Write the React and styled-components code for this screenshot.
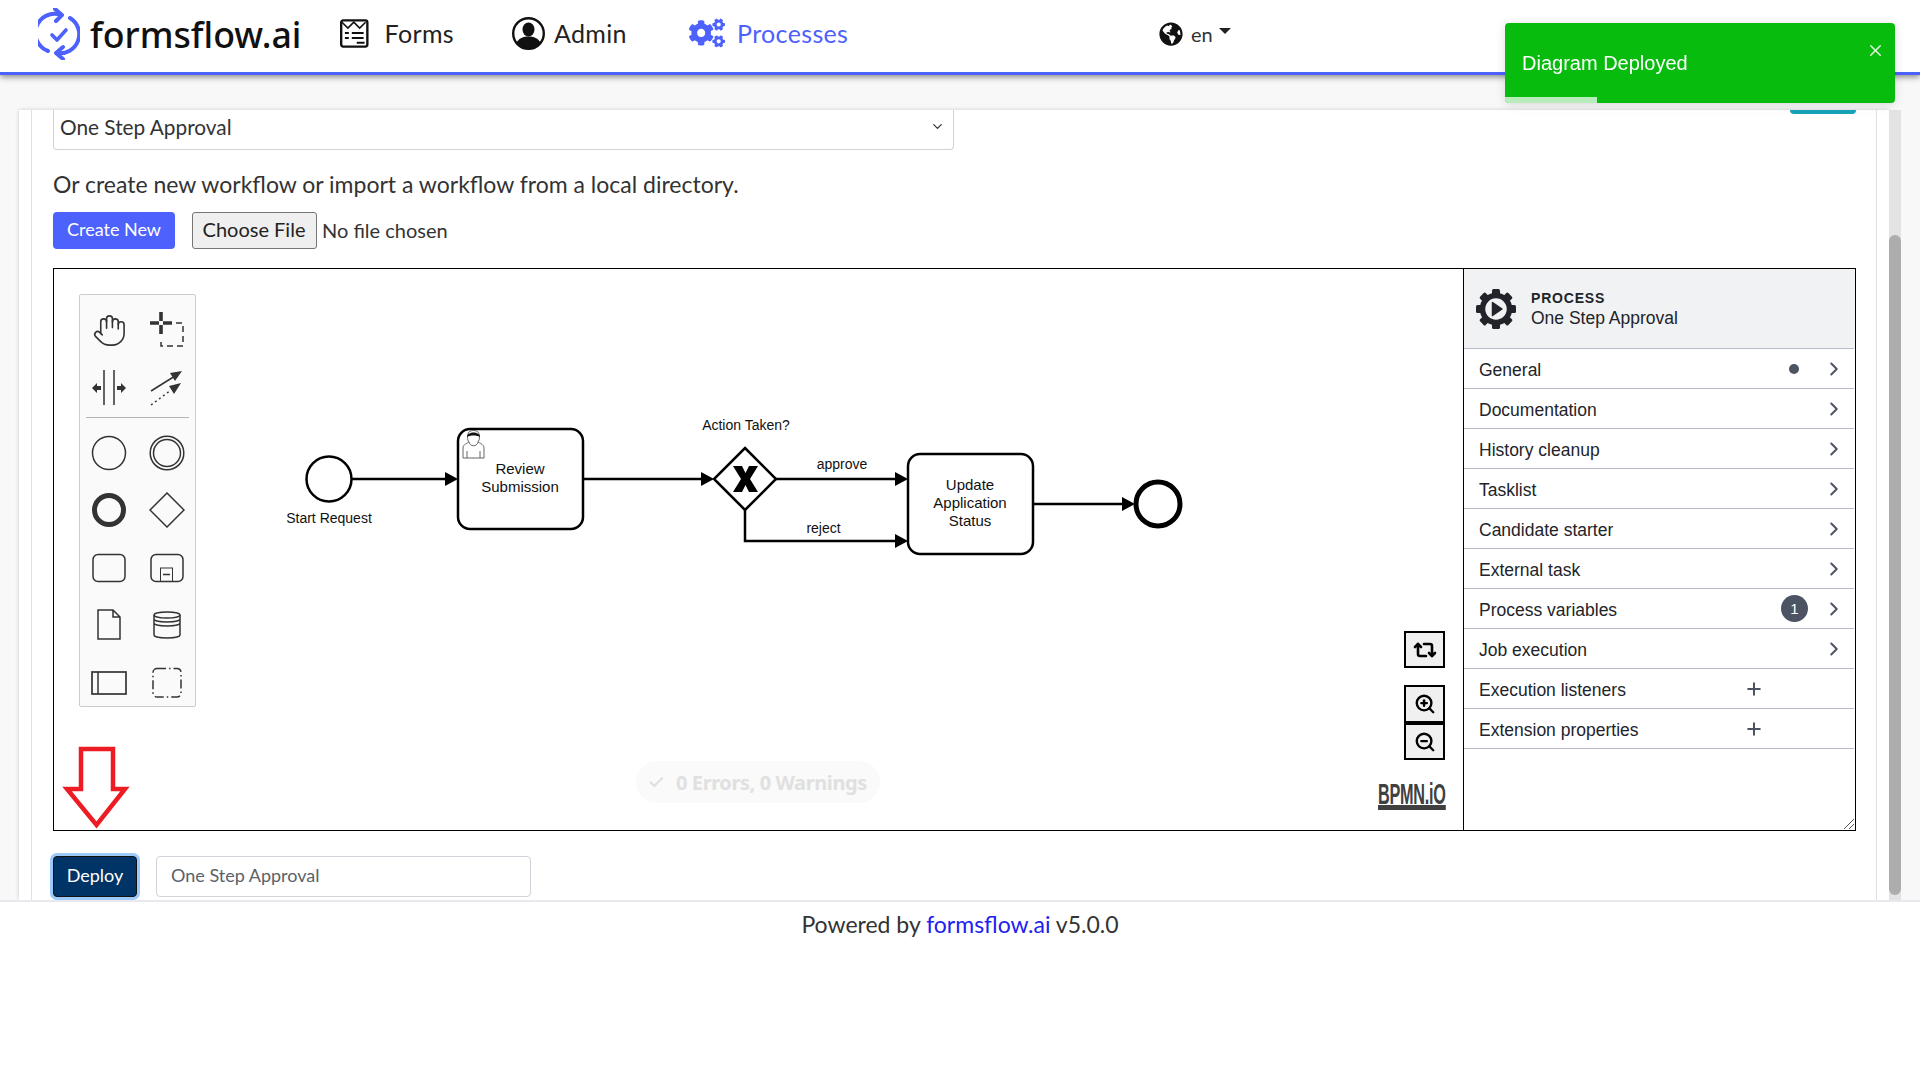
import React from "react";
import styled, { createGlobalStyle } from "styled-components";
import { Hand, ChevronRight, Plus, ZoomIn, ZoomOut, Repeat2, ChevronDown, X, Check } from "lucide-react";
import { FaCogs, FaGlobeAmericas } from "react-icons/fa";

const Global = createGlobalStyle`
  html, body { margin: 0; padding: 0; background: #fff; }
  body { font-family: Lato, "Noto Sans", sans-serif; color: #212529; overflow: hidden; }
  * { box-sizing: border-box; }
`;

const Page = styled.div`
  width: 1920px; height: 1080px; display: flex; flex-direction: column; background: #fff;
`;
const Header = styled.header`
  position: relative; z-index: 2; height: 75px; flex: none; display: flex; align-items: center;
  padding-left: 38px; background: #fff; border-bottom: 3px solid #4d61fc;
  box-shadow: 0 2px 6px rgba(0,0,0,.45);
`;
const Brand = styled.div`
  display: flex; align-items: center; gap: 10px; font: 500 35.7px "Noto Sans", sans-serif; color: #111;
  width: 262px; flex: none; margin-top: -5px;
  svg { flex: none; }
`;
const Nav = styled.nav`
  display: flex; align-items: center; gap: 58px; margin-left: 40px; height: 100%;
`;
const NavItem = styled.a`
  display: flex; align-items: center; gap: ${p => p.$gap}px; font-size: 25px; color: ${p => p.$active ? "#4d61fc" : "#222"};
  margin-top: -6px; width: ${p => p.$w}px; flex: none; letter-spacing: .35px;
`;
const Lang = styled.div`
  display: flex; align-items: center; gap: 8px; font-size: 20px; color: #333; margin-left: 310px; margin-top: -5px;
`;
const Caret = styled.span`
  display: block; width: 0; height: 0; border-left: 6px solid transparent; border-right: 6px solid transparent;
  border-top: 6px solid #222; margin: -6px 0 0 -2px;
`;
const Main = styled.main`
  height: 825px; flex: none; background: #f8f8f8; padding: 35px 19px 0; display: flex;
`;
const Card = styled.div`
  width: 1870px; background: #fff; padding: 0 12px; box-shadow: 0 0 4px rgba(0,0,0,.18); overflow: hidden;
`;
const Inner = styled.div`
  height: 100%; border-left: 1px solid #dee2e6; border-right: 1px solid #dee2e6; padding: 0 20px 0 21px;
`;
const TopRow = styled.div`
  display: flex; justify-content: space-between; height: 40px;
`;
const Select = styled.div`
  width: 901px; display: flex; align-items: center; justify-content: space-between; padding: 0 8px 7px 6px;
  border: 1px solid #ced4da; border-top: none; border-radius: 0 0 4px 4px; font-size: 20.8px; color: #333;
`;
const TealEdge = styled.div`
  width: 66px; height: 4px; background: #17a2b8; border-radius: 0 0 5px 5px;
`;
const Lead = styled.p`
  margin: 20px 0 0; height: 30px; line-height: 29px; font-size: 23px; color: #333;
`;
const FileRow = styled.div`
  display: flex; align-items: center; margin-top: 12px; height: 37px;
`;
const PrimaryButton = styled.button`
  width: 122px; height: 37px; padding: 0 0 3px; border: none; border-radius: 4px; background: #4d61fc; color: #fff;
  font: 18px Lato, sans-serif; margin-right: 17px;
`;
const FileButton = styled.button`
  width: 125px; height: 37px; padding: 0 1px 3px 0; border: 1px solid #767676; border-radius: 3px; background: #efefef; color: #222;
  font: 20px Lato, sans-serif; margin-right: 5px;
`;
const NoFile = styled.span`
  font-size: 20px; color: #333; margin-top: -2px;
`;
const Diagram = styled.section`
  display: flex; height: 563px; margin-top: 19px; width: 1803px; border: 1px solid #000;
`;
const Canvas = styled.div`
  position: relative; flex: 1; background: #fff;
`;
const DiagramSvg = styled.svg`
  position: absolute; left: 0; top: 0;
`;
const Palette = styled.div`
  position: absolute; left: 25px; top: 25px; width: 117px; height: 413px; background: #fafafa;
  border: 1px solid #ccc; border-radius: 2px; padding-top: 6px;
`;
const ToolGrid = styled.div`
  display: grid; grid-template-columns: 58px 58px; grid-auto-rows: ${p => p.$row}px;
  justify-items: center; align-items: center; margin-top: ${p => p.$top}px;
`;
const PaletteRule = styled.hr`
  margin: 0 6px; border: none; border-top: 1px solid #b5b5b5;
`;
const ZoomStack = styled.div`
  position: absolute; right: 18px; top: 362px; display: flex; flex-direction: column;
`;
const ZoomBtn = styled.div`
  width: 41px; height: ${p => p.$h}px; margin-bottom: ${p => p.$mb}px; background: #f0f0f0; border: 2.5px solid #000;
  display: flex; align-items: center; justify-content: center; color: #000;
`;
const Pill = styled.div`
  position: absolute; left: 582px; top: 492px; width: 244px; height: 42px; border-radius: 21px; background: #fafafa;
  display: flex; align-items: center; gap: 11px; padding-left: 12px; color: #e0e0e0; font: 700 20px "Noto Sans", sans-serif; letter-spacing: -.4px;
`;
const Powered = styled.div`
  position: absolute; right: 17px; bottom: 20px; font: 700 29px/1 "Liberation Sans", sans-serif;
  color: #404040; border-bottom: 5px solid #404040; letter-spacing: -.5px; height: 31px; padding-top: 1px;
  transform: scaleX(.56); transform-origin: right center;
`;
const Panel = styled.aside`
  position: relative; width: 392px; flex: none; border-left: 1px solid #000; font-family: "Liberation Sans", Arial, sans-serif;
`;
const PanelHead = styled.div`
  height: 79px; background: #f1f2f3; display: flex; align-items: center; gap: 15px; padding-left: 12px;
`;
const PanelText = styled.div`
  padding-top: 2px;
`;
const PanelType = styled.div`
  font-weight: 700; font-size: 14px; letter-spacing: .8px; color: #22242a; line-height: 16px;
`;
const PanelName = styled.div`
  font-size: 17.5px; color: #22242a; line-height: 21px; margin-top: 2px;
`;
const Row = styled.div`
  height: 40px; display: flex; align-items: center; margin-right: 1px; border-top: 1px solid #b9bcc6; padding-left: 15px;
  font-size: 17.5px; color: #22242a;
  &:last-of-type { border-bottom: 1px solid #b9bcc6; height: 41px; }
`;
const RowLabel = styled.span`
  flex: 1; padding-top: 3px;
`;
const RowDot = styled.span`
  width: 10px; height: 10px; border-radius: 50%; background: #4c5363; margin-right: 24px;
`;
const RowBadge = styled.span`
  width: 27px; height: 27px; border-radius: 50%; background: #4c5363; color: #fff; font-size: 15px;
  display: flex; align-items: center; justify-content: center; margin-right: 15px;
`;
const RowChevron = styled.span`
  width: 22px; margin-right: 9px; display: flex; justify-content: center; color: #4c5363;
`;
const RowPlus = styled.span`
  display: flex; margin-right: 90px; color: #4c5363;
`;
const Resize = styled.svg`
  position: absolute; right: 0; bottom: 0;
`;
const DeployRow = styled.div`
  display: flex; margin-top: 25px; height: 41px; gap: 19px;
`;
const DeployButton = styled.button`
  width: 84px; height: 41px; padding: 0 0 4px; border: 1px solid #111; border-radius: 4px; background: #003366; color: #fff;
  font: 18px Lato, sans-serif; box-shadow: 0 0 0 3px #9ccbfb;
`;
const NameInput = styled.div`
  width: 375px; height: 41px; border: 1px solid #ced4da; border-radius: 4px; padding: 0 14px 3px; display: flex; align-items: center;
  font-size: 18px; color: #5a6268;
`;
const ScrollTrack = styled.div`
  width: 12px; flex: none; background: #e3e3e3; display: flex; flex-direction: column; justify-content: flex-end; padding-bottom: 5px;
`;
const ScrollThumb = styled.div`
  height: 660px; background: #adadad; border-radius: 6px;
`;
const Footer = styled.footer`
  flex: 1; border-top: 2px solid #e8e8ee; background: #fff; text-align: center; padding-top: 8px; font-size: 23px; color: #333;
`;
const FooterLink = styled.a`
  color: #2020f0;
`;
const Toast = styled.div`
  position: fixed; right: 25px; top: 23px; width: 390px; height: 80px; z-index: 5; background: #07bc0c; color: #fff; border-radius: 4px;
  display: flex; align-items: center; padding-left: 17px; font: 20px "Liberation Sans", Arial, sans-serif; overflow: hidden;
  box-shadow: 0 1px 10px rgba(0,0,0,.1), 0 2px 15px rgba(0,0,0,.05);
`;
const ToastClose = styled.span`
  position: absolute; right: 10px; top: 18px; display: flex; color: rgba(255,255,255,.85);
`;
const ToastBar = styled.span`
  position: absolute; left: 0; bottom: 0; height: 6px; width: 92px; background: rgba(255,255,255,.72);
`;

const LogoIcon = () => (
  <svg width="42" height="52" viewBox="0 0 42 52" fill="none" stroke="#4d61fc" strokeWidth="4" strokeLinecap="round" strokeLinejoin="round">
    <path d="M10 43A19 19 0 0 1 23 7" />
    <path d="M17 1l7 6-6 6" />
    <path d="M32 10A19 19 0 0 1 19 45" />
    <path d="M25 39l-7 6 7 6" />
    <path d="M14 27l5 5 9-10" strokeWidth="3.6" />
  </svg>
);
const FormsIcon = () => (
  <svg width="29" height="29" viewBox="0 0 29 29" fill="none" stroke="#111" strokeWidth="2.4">
    <rect x="1.2" y="1.2" width="26.6" height="26.6" rx="2" />
    <path d="M2 3l6 6 6-6 6 6 6-6" strokeWidth="1.6" />
    <path d="M5 14h4M12 14h12M5 19h4M12 19h12M17 24h8" strokeWidth="2" />
  </svg>
);
const AdminIcon = () => (
  <svg width="33" height="33" viewBox="0 0 33 33">
    <circle cx="16.5" cy="16.5" r="15.3" fill="#fff" stroke="#111" strokeWidth="2.4" />
    <ellipse cx="16.5" cy="12.5" rx="6" ry="7" fill="#111" />
    <path d="M4.5 26c2-5 7-6.500 12-6.500S26.500 21 28.500 26a15 15 0 0 1-24 0z" fill="#111" />
  </svg>
);
const GearIcon = () => (
  <svg width="40" height="40" viewBox="0 0 40 40">
    {[0, 45, 90, 135, 180, 225, 270, 315].map(a => (
      <rect key={a} x="16" y="0" width="8" height="8" rx="1.500" fill="#22242a" transform={`rotate(${a} 20 20)`} />
    ))}
    <circle cx="20" cy="20" r="13.500" fill="none" stroke="#22242a" strokeWidth="5.500" />
    <path d="M16.500 13.500L26 20l-9.500 6.500z" fill="#22242a" stroke="#22242a" strokeWidth="1.500" strokeLinejoin="round" />
  </svg>
);

const ic = { width: 36, height: 36, viewBox: "0 0 36 36", fill: "none", stroke: "#333", strokeWidth: 1.5 };
const tools = [
  <Hand key="h" size={35} strokeWidth={1.1} color="#333" />,
  <svg key="l" {...ic}>
    <path d="M12 0v9M12 13v9M1 11h9M14 11h9" strokeWidth="3.600" />
    <path d="M27 11h7v23H12v-7" strokeDasharray="6 4" />
  </svg>,
  <svg key="s" {...ic}>
    <path d="M13 0v35M23 0v35" />
    <path d="M1 18l5-5v3h4v4H6v3zM35 18l-5-5v3h-4v4h4v3z" fill="#333" stroke="none" />
  </svg>,
  <svg key="c" {...ic}>
    <path d="M2 21L26 6" />
    <path d="M33 1L21 3l5 8z" fill="#333" stroke="none" />
    <path d="M2 35l20-15" strokeDasharray="2 3" />
    <path d="M32 13l-12 3 5 8z" fill="#333" stroke="none" />
  </svg>,
];
const shapes = [
  <svg key="1" {...ic}><circle cx="18" cy="18" r="16.500" /></svg>,
  <svg key="2" {...ic}><circle cx="18" cy="18" r="16.800" /><circle cx="18" cy="18" r="13.500" /></svg>,
  <svg key="3" {...ic}><circle cx="18" cy="18" r="14.500" strokeWidth="5" /></svg>,
  <svg key="4" {...ic}><path d="M18 1l17 17-17 17L1 18z" /></svg>,
  <svg key="5" {...ic}><rect x="2" y="4.500" width="32" height="27" rx="5" /></svg>,
  <svg key="6" {...ic}><rect x="2" y="4.500" width="32" height="27" rx="5" /><rect x="11.500" y="18" width="12" height="13.500" strokeWidth="1" /><path d="M14 24.500h7" /></svg>,
  <svg key="7" {...ic}><path d="M7 3h15l7 7v22H7zM22 3v7h7" /></svg>,
  <svg key="8" {...ic}><ellipse cx="18" cy="8" rx="13" ry="3" /><path d="M5 8v20c0 4 26 4 26 0V8M5 12c0 4 26 4 26 0M5 16c0 4 26 4 26 0" /></svg>,
  <svg key="9" {...ic}><rect x="1" y="7" width="34" height="22" strokeWidth="1.700" /><path d="M7 7v22" /></svg>,
  <svg key="10" {...ic}><rect x="4" y="3.500" width="28" height="28.500" rx="4" strokeDasharray="9 3 1.500 3" /></svg>,
];

const Head = ({ x, y }) => <path d={`M${x} ${y}l-13 -7v14z`} fill="#000" />;
const T = styled.text`
  font: ${p => p.$size}px "Liberation Sans", Arial, sans-serif; fill: #111; text-anchor: middle;
`;

const Flow = () => (
  <DiagramSvg width="1409" height="561" viewBox="54 269 1409 561" fill="none" stroke="#000">
    <g strokeWidth="2.500">
      <path d="M352 479H450M583 479H706M776 479H899M745 510V541H899M1033 504H1125" />
      <circle cx="329" cy="479" r="22.500" fill="#fff" />
      <rect x="458" y="429" width="125" height="100" rx="12" fill="#fff" />
      <rect x="908" y="454" width="125" height="100" rx="12" fill="#fff" />
      <path d="M745 448l31 31-31 31-31-31z" fill="#fff" />
    </g>
    <circle cx="1158" cy="504" r="22" fill="#fff" strokeWidth="5" />
    <path d="M733 466h9l3.500 7 3.500-7h9l-8 13 8 13h-9l-3.500-7-3.500 7h-9l8-13z" fill="#000" stroke="none" />
    <g stroke="none">
      <Head x={458} y={479} /><Head x={714} y={479} /><Head x={908} y={479} /><Head x={908} y={541} /><Head x={1135} y={504} />
    </g>
    <g stroke="#555" strokeWidth="0.900">
      <path d="M463 458v-10c0-4 5-5 6-6 -2-2-2-8 0-10 2-2 7-2 9 0 2 2 2 8 0 10 1 1 6 2 6 6v10zM469 442c1 5 8 5 9 0M467 458v-7M480 458v-7" />
    </g>
    <path d="M467 437c0-6 13-6 13 0-3-2-10-2-13 0z" fill="#111" stroke="none" />
    <g stroke="none">
      <T $size={14} x="329" y="523">Start Request</T>
      <T $size={15} x="520" y="474">Review</T>
      <T $size={15} x="520" y="492">Submission</T>
      <T $size={14} x="746" y="430">Action Taken?</T>
      <T $size={14} x="842" y="469">approve</T>
      <T $size={14} x="823.500" y="533">reject</T>
      <T $size={15} x="970" y="490">Update</T>
      <T $size={15} x="970" y="508">Application</T>
      <T $size={15} x="970" y="526">Status</T>
    </g>
    <path d="M81 749h32v40h12L96.500 825 67 789h14z" stroke="#ed1c24" strokeWidth="4.500" strokeLinejoin="miter" />
  </DiagramSvg>
);

const rows = [
  ["General", "dot", true], ["Documentation", null, true], ["History cleanup", null, true], ["Tasklist", null, true],
  ["Candidate starter", null, true], ["External task", null, true], ["Process variables", "badge", true], ["Job execution", null, true],
  ["Execution listeners", null, false], ["Extension properties", null, false],
];

export default function App() {
  return (
    <Page>
      <Global />
      <Header>
        <Brand><LogoIcon />formsflow.ai</Brand>
        <Nav>
          <NavItem $w={114} $gap={16}><FormsIcon />Forms</NavItem>
          <NavItem $w={119} $gap={9}><AdminIcon />Admin</NavItem>
          <NavItem $w={160} $gap={12} $active><FaCogs size={36} />Processes</NavItem>
        </Nav>
        <Lang><FaGlobeAmericas size={24} color="#111" />en<Caret /></Lang>
      </Header>
      <Main>
        <Card>
          <Inner>
            <TopRow>
              <Select>One Step Approval<ChevronDown size={15} strokeWidth={2} color="#333" /></Select>
              <TealEdge />
            </TopRow>
            <Lead>Or create new workflow or import a workflow from a local directory.</Lead>
            <FileRow>
              <PrimaryButton>Create New</PrimaryButton>
              <FileButton>Choose File</FileButton>
              <NoFile>No file chosen</NoFile>
            </FileRow>
            <Diagram>
              <Canvas>
                <Flow />
                <Palette>
                  <ToolGrid $row={58} $top={0}>{tools}</ToolGrid>
                  <PaletteRule />
                  <ToolGrid $row={57.5} $top={6}>{shapes}</ToolGrid>
                </Palette>
                <ZoomStack>
                  <ZoomBtn $h={37} $mb={17}><Repeat2 size={24} strokeWidth={2.6} /></ZoomBtn>
                  <ZoomBtn $h={38} $mb={0}><ZoomIn size={22} strokeWidth={2.6} /></ZoomBtn>
                  <ZoomBtn $h={37} $mb={0}><ZoomOut size={22} strokeWidth={2.6} /></ZoomBtn>
                </ZoomStack>
                <Pill><Check size={17} strokeWidth={3} color="#e0e0e0" />0 Errors, 0 Warnings</Pill>
                <Powered>BPMN.iO</Powered>
              </Canvas>
              <Panel>
                <PanelHead>
                  <GearIcon />
                  <PanelText>
                    <PanelType>PROCESS</PanelType>
                    <PanelName>One Step Approval</PanelName>
                  </PanelText>
                </PanelHead>
                {rows.map(([label, mark, chevron]) => (
                  <Row key={label}>
                    <RowLabel>{label}</RowLabel>
                    {mark === "dot" && <RowDot />}
                    {mark === "badge" && <RowBadge>1</RowBadge>}
                    {chevron ? <RowChevron><ChevronRight size={22} strokeWidth={2.2} /></RowChevron> : <RowPlus><Plus size={20} strokeWidth={2.4} /></RowPlus>}
                  </Row>
                ))}
                <Resize width="12" height="12" viewBox="0 0 12 12" fill="none" stroke="#555">
                  <path d="M1 11L11 1M6 11L11 6" />
                </Resize>
              </Panel>
            </Diagram>
            <DeployRow>
              <DeployButton>Deploy</DeployButton>
              <NameInput>One Step Approval</NameInput>
            </DeployRow>
          </Inner>
        </Card>
        <ScrollTrack><ScrollThumb /></ScrollTrack>
      </Main>
      <Footer>Powered by <FooterLink>formsflow.ai</FooterLink> v5.0.0</Footer>
      <Toast>
        Diagram Deployed
        <ToastClose><X size={19} strokeWidth={2} /></ToastClose>
        <ToastBar />
      </Toast>
    </Page>
  );
}
